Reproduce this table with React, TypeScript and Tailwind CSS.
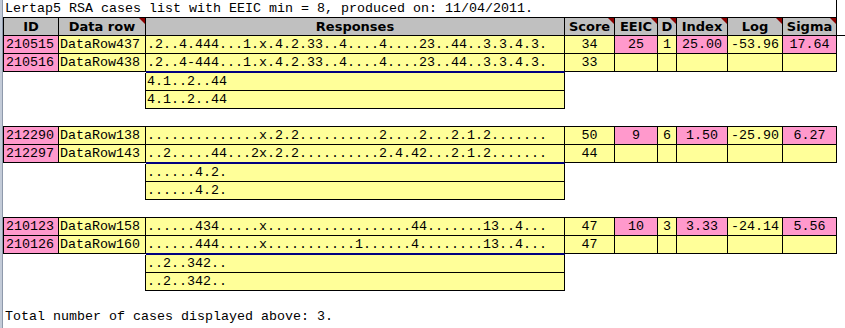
import React from "react";

interface CaseRow {
  id: string;
  dataRow: string;
  responses: string;
  score: string;
  eeic?: string;
  d?: string;
  index?: string;
  log?: string;
  sigma?: string;
}

interface CaseGroup {
  rows: [CaseRow, CaseRow];
  extra: [string, string];
}

const groups: CaseGroup[] = [
  {
    rows: [
      {
        id: "210515",
        dataRow: "DataRow437",
        responses: ".2..4.444...1.x.4.2.33..4....4....23..44..3.3.4.3.",
        score: "34",
        eeic: "25",
        d: "1",
        index: "25.00",
        log: "-53.96",
        sigma: "17.64",
      },
      {
        id: "210516",
        dataRow: "DataRow438",
        responses: ".2..4-444...1.x.4.2.33..4....4....23..44..3.3.4.3.",
        score: "33",
      },
    ],
    extra: ["4.1..2..44", "4.1..2..44"],
  },
  {
    rows: [
      {
        id: "212290",
        dataRow: "DataRow138",
        responses: "..............x.2.2..........2....2...2.1.2.......",
        score: "50",
        eeic: "9",
        d: "6",
        index: "1.50",
        log: "-25.90",
        sigma: "6.27",
      },
      {
        id: "212297",
        dataRow: "DataRow143",
        responses: "..2.....44...2x.2.2..........2.4.42...2.1.2.......",
        score: "44",
      },
    ],
    extra: ["......4.2.", "......4.2."],
  },
  {
    rows: [
      {
        id: "210123",
        dataRow: "DataRow158",
        responses: "......434.....x..................44.......13..4...",
        score: "47",
        eeic: "10",
        d: "3",
        index: "3.33",
        log: "-24.14",
        sigma: "5.56",
      },
      {
        id: "210126",
        dataRow: "DataRow160",
        responses: "......444.....x...........1......4........13..4...",
        score: "47",
      },
    ],
    extra: ["..2..342..", "..2..342.."],
  },
];

const headers = [
  { label: "ID", w: "w-[56px] border-l", note: false },
  { label: "Data row", w: "w-[87px]", note: true },
  { label: "Responses", w: "w-[419px]", note: false },
  { label: "Score", w: "w-[50px]", note: true },
  { label: "EEIC", w: "w-[43px]", note: true },
  { label: "D", w: "w-[19px]", note: true },
  { label: "Index", w: "w-[51px]", note: true },
  { label: "Log", w: "w-[55px]", note: true },
  { label: "Sigma", w: "w-[54px]", note: true },
];

const PINK = "bg-[#ff99cc]";
const YELLOW = "bg-[#ffff99]";

function Cell({
  className,
  children,
}: {
  className: string;
  children?: React.ReactNode;
}) {
  return (
    <div
      className={`h-[18px] shrink-0 overflow-hidden whitespace-pre border-r border-b border-black leading-[17px] ${className}`}
    >
      {children}
    </div>
  );
}

function DataLine({ row, lead, last }: { row: CaseRow; lead: boolean; last: boolean }) {
  return (
    <div className={`flex items-start ${lead ? "border-t border-black w-[834px]" : ""}`}>
      <Cell className={`w-[56px] border-l pl-[2px] ${PINK}`}>{row.id}</Cell>
      <Cell className={`w-[87px] pl-[1px] ${YELLOW}`}>{row.dataRow}</Cell>
      {/* second line of a pair gets the navy rule under the responses */}
      <Cell
        className={`w-[419px] pl-[1px] ${YELLOW} ${
          last ? "h-[19px] border-b-2 border-b-[#000080]" : ""
        }`}
      >
        {row.responses}
      </Cell>
      <Cell className={`w-[50px] text-center ${YELLOW}`}>{row.score}</Cell>
      <Cell className={`w-[43px] text-center ${row.eeic ? PINK : YELLOW}`}>{row.eeic}</Cell>
      <Cell className={`w-[19px] text-center ${YELLOW}`}>{row.d}</Cell>
      <Cell className={`w-[51px] text-center ${row.index ? PINK : YELLOW}`}>{row.index}</Cell>
      <Cell className={`w-[55px] text-center ${YELLOW}`}>{row.log}</Cell>
      <Cell className={`w-[54px] text-center ${row.sigma ? PINK : YELLOW}`}>{row.sigma}</Cell>
    </div>
  );
}

function Group({ group, first }: { group: CaseGroup; first: boolean }) {
  return (
    <div className={first ? "" : "mt-[17px]"}>
      <DataLine row={group.rows[0]} lead={!first} last={false} />
      <DataLine row={group.rows[1]} lead={false} last={true} />
      {group.extra.map((text, i) => (
        <div
          key={i}
          className={`ml-[142px] h-[18px] w-[420px] whitespace-pre border-x border-b border-black pl-[1px] leading-[17px] ${YELLOW}`}
        >
          {text}
        </div>
      ))}
    </div>
  );
}

export default function App() {
  return (
    <div
      className="flex h-[328px] w-[845px] overflow-hidden bg-white text-[13.33px] text-black"
      style={{ fontFamily: '"Liberation Mono", "Courier New", monospace' }}
    >
      {/* sheet edge */}
      <div className="h-full w-[3px] shrink-0 border-r border-[#8e99ab] bg-[#c3cbd8]" />

      <div className="flex min-w-0 flex-1 flex-col">
        <div className="h-[17px] w-[834px] whitespace-pre border-r border-black pl-[2px] leading-[17px]">
          Lertap5 RSA cases list with EEIC min = 8, produced on: 11/04/2011.
        </div>

        <div className="flex">
          {headers.map((h) => (
            <div
              key={h.label}
              className={`relative h-[19px] shrink-0 border-y border-r border-black bg-[#c0c0c0] text-center text-[13px] font-bold leading-[17px] ${h.w}`}
              style={{ fontFamily: '"DejaVu Sans", Verdana, sans-serif' }}
            >
              {h.label}
              {h.note && (
                <span className="absolute right-0 top-0 h-0 w-0 border-l-[6px] border-t-[6px] border-l-transparent border-t-[#8b0000]" />
              )}
            </div>
          ))}
          <div className="h-[19px] flex-1 border-b border-black" />
        </div>

        {groups.map((g, i) => (
          <Group key={g.rows[0].id} group={g} first={i === 0} />
        ))}

        <div className="mt-[17px] h-[18px] whitespace-pre pl-[2px] leading-[18px]">
          Total number of cases displayed above: 3.
        </div>
      </div>
    </div>
  );
}
